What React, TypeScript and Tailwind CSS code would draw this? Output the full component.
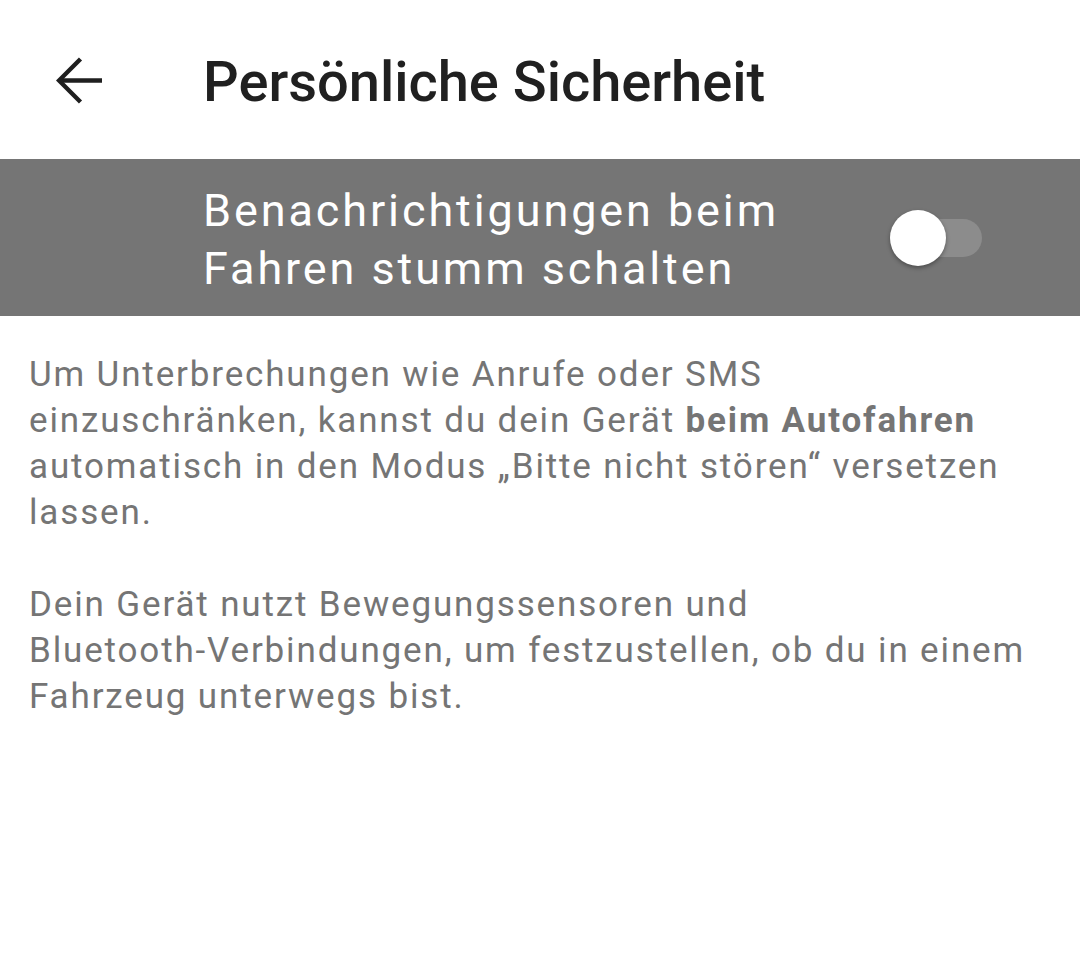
import React from "react";

export default function App() {
  return (
    <div className="w-[1080px] h-[964px] bg-white" style={{ fontFamily: "Roboto, sans-serif" }}>
      <div className="h-[159px] flex items-center">
        <div className="w-[203px] pl-[56px] flex items-center mt-[1px]">
          <svg width="47" height="47" viewBox="0 0 47 47" fill="none" stroke="#1f1f1f" strokeWidth="4.4" strokeLinecap="butt" strokeLinejoin="miter">
            <path d="M3 23.5H46" />
            <path d="M24.5 2L3 23.5 24.5 45" />
          </svg>
        </div>
        <div className="text-[56px] font-medium text-[#202020] mt-[4px]">Persönliche Sicherheit</div>
      </div>
      <div className="h-[157px] bg-[#757575] flex items-center">
        <div className="pl-[203px] w-[860px] text-[45px] leading-[58px] tracking-[2.9px] text-white mt-[4px]">
          Benachrichtigungen beim<br />Fahren stumm schalten
        </div>
        <div className="relative w-[100px] h-[60px] flex items-center">
          <div className="absolute left-[30px] w-[92px] h-[38px] rounded-full bg-[#8c8c8c]" />
          <div className="absolute left-[30px] w-[56px] h-[56px] rounded-full bg-white shadow-[0_2px_4px_rgba(0,0,0,0.35)]" />
        </div>
      </div>
      <div className="px-[29px] pt-[36px] text-[35px] leading-[46px] tracking-[1.85px] text-[#757575] whitespace-nowrap">
        <p>
          Um Unterbrechungen wie Anrufe oder SMS<br />
          einzuschränken, kannst du dein Gerät <b className="font-bold">beim Autofahren</b><br />
          automatisch in den Modus „Bitte nicht stören“ versetzen<br />
          lassen.
        </p>
        <p className="mt-[46px]">
          Dein Gerät nutzt Bewegungssensoren und<br />
          Bluetooth-Verbindungen, um festzustellen, ob du in einem<br />
          Fahrzeug unterwegs bist.
        </p>
      </div>
    </div>
  );
}
